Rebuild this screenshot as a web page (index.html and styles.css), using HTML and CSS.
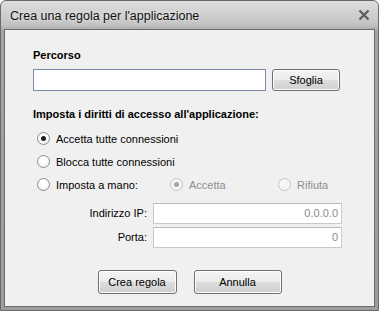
FILE: index.html
```html
<!DOCTYPE html>
<html lang="it">
<head>
    <meta charset="UTF-8">
    <title>Crea una regola per l'applicazione</title>
    <link rel="stylesheet" href="styles.css">
</head>
<body>
    <div class="window">
        <div class="titlebar">
            <span class="title">Crea una regola per l'applicazione</span>
            <svg class="close" width="12" height="12" viewBox="0 0 12 12">
                <path d="M1.5 1.5 L10.5 10.5 M10.5 1.5 L1.5 10.5" stroke="#5c5c5c" stroke-width="2.2" fill="none"/>
            </svg>
        </div>
        <div class="content">
            <div class="heading">Percorso</div>
            <div class="path-row">
                <input type="text" class="path-input">
                <button type="button" class="btn btn-browse">Sfoglia</button>
            </div>

            <div class="heading heading-rights">Imposta i diritti di accesso all'applicazione:</div>
            <div class="radio-row">
                <span class="radio checked"></span>
                <span>Accetta tutte connessioni</span>
            </div>
            <div class="radio-row">
                <span class="radio"></span>
                <span>Blocca tutte connessioni</span>
            </div>
            <div class="radio-row">
                <span class="option option-manual">
                    <span class="radio"></span>
                    <span>Imposta a mano:</span>
                </span>
                <span class="option option-accept disabled">
                    <span class="radio checked"></span>
                    <span>Accetta</span>
                </span>
                <span class="option disabled">
                    <span class="radio"></span>
                    <span>Rifiuta</span>
                </span>
            </div>

            <div class="fields">
                <label class="field-label">Indirizzo IP:</label>
                <div class="field-input">0.0.0.0</div>
                <label class="field-label">Porta:</label>
                <div class="field-input">0</div>
            </div>

            <div class="actions">
                <button type="button" class="btn btn-create">Crea regola</button>
                <button type="button" class="btn btn-cancel">Annulla</button>
            </div>
        </div>
    </div>
</body>
</html>
```

FILE: styles.css
```css
body {
    margin: 0;
    padding: 0;
    font-family: "Liberation Sans", Arial, sans-serif;
    font-size: 11px;
    color: #000;
    background: #fff;
}

.window {
    width: 379px;
    height: 311px;
    box-sizing: border-box;
    border: 1px solid #6a6a6a;
    border-radius: 6px 6px 0 0;
    background: linear-gradient(#dedede 0px, #c2c2c2 24px, #a4a4a4 30px, #9c9c9c 100%);
    padding: 0 3px 3px 3px;
    display: flex;
    flex-direction: column;
}

.titlebar {
    height: 28px;
    display: flex;
    align-items: center;
    justify-content: space-between;
    padding: 0 4px 0 6px;
}

.title {
    font-size: 12.5px;
    color: #111;
    text-shadow: 0 0 4px rgba(255, 255, 255, 0.8);
    margin-top: 1px;
}

.close {
    margin-top: 0;
    margin-right: 1px;
}

.content {
    flex: 1;
    border: 1px solid #6b6b6b;
    background-color: #f0f0f0;
    padding: 18px 0 0 28px;
}

.heading {
    font-weight: bold;
    line-height: 14px;
    height: 14px;
}

.path-row {
    display: flex;
    gap: 6px;
    margin-top: 7px;
}

.path-input {
    width: 233px;
    height: 22px;
    box-sizing: border-box;
    border: 1px solid #7a8aa9;
    background: #fff;
    margin: 0;
    padding: 0 3px;
    font: inherit;
}

.btn {
    box-sizing: border-box;
    border: 1px solid #707070;
    border-radius: 3px;
    background: linear-gradient(#f4f4f4 0%, #ebebeb 50%, #dddddd 51%, #cfcfcf 100%);
    font: inherit;
    color: #000;
    padding: 0;
    box-shadow: inset 0 0 0 1px #fcfcfc;
}

.btn-browse {
    width: 68px;
    height: 22px;
}

.heading-rights {
    margin-top: 16px;
    margin-bottom: 6px;
}

.radio-row {
    display: flex;
    align-items: center;
    height: 23px;
    padding-left: 4px;
}

.option {
    display: flex;
    align-items: center;
}

.option-manual {
    width: 133px;
}

.option-accept {
    width: 108px;
}

.radio {
    width: 13px;
    height: 13px;
    box-sizing: border-box;
    border-radius: 50%;
    border: 1px solid #8a8f96;
    background: radial-gradient(circle at 50% 40%, #ffffff 30%, #e6e6e6 100%);
    margin-right: 6px;
    position: relative;
    flex: none;
}

.radio.checked::after {
    content: "";
    position: absolute;
    left: 3px;
    top: 3px;
    width: 5px;
    height: 5px;
    border-radius: 50%;
    background: #1e1e1e;
}

.disabled {
    color: #8d8d8d;
}

.disabled .radio {
    border-color: #c2c2c2;
    background: #f6f6f6;
}

.disabled .radio.checked::after {
    background: #a6a6a6;
}

.fields {
    display: grid;
    grid-template-columns: 114px 189px;
    column-gap: 6px;
    row-gap: 3px;
    margin-top: 7px;
}

.field-label {
    text-align: right;
    line-height: 21px;
}

.field-input {
    height: 21px;
    box-sizing: border-box;
    border: 1px solid #c9c9c9;
    border-top-color: #b9b9b9;
    background: #fff;
    color: #8d8d8d;
    text-align: right;
    padding: 2px 3px 0 0;
    line-height: 15px;
}

.actions {
    display: flex;
    justify-content: center;
    gap: 17px;
    margin-top: 22px;
    margin-left: -28px;
}

.btn-create {
    width: 79px;
    height: 24px;
}

.btn-cancel {
    width: 88px;
    height: 24px;
}
```
